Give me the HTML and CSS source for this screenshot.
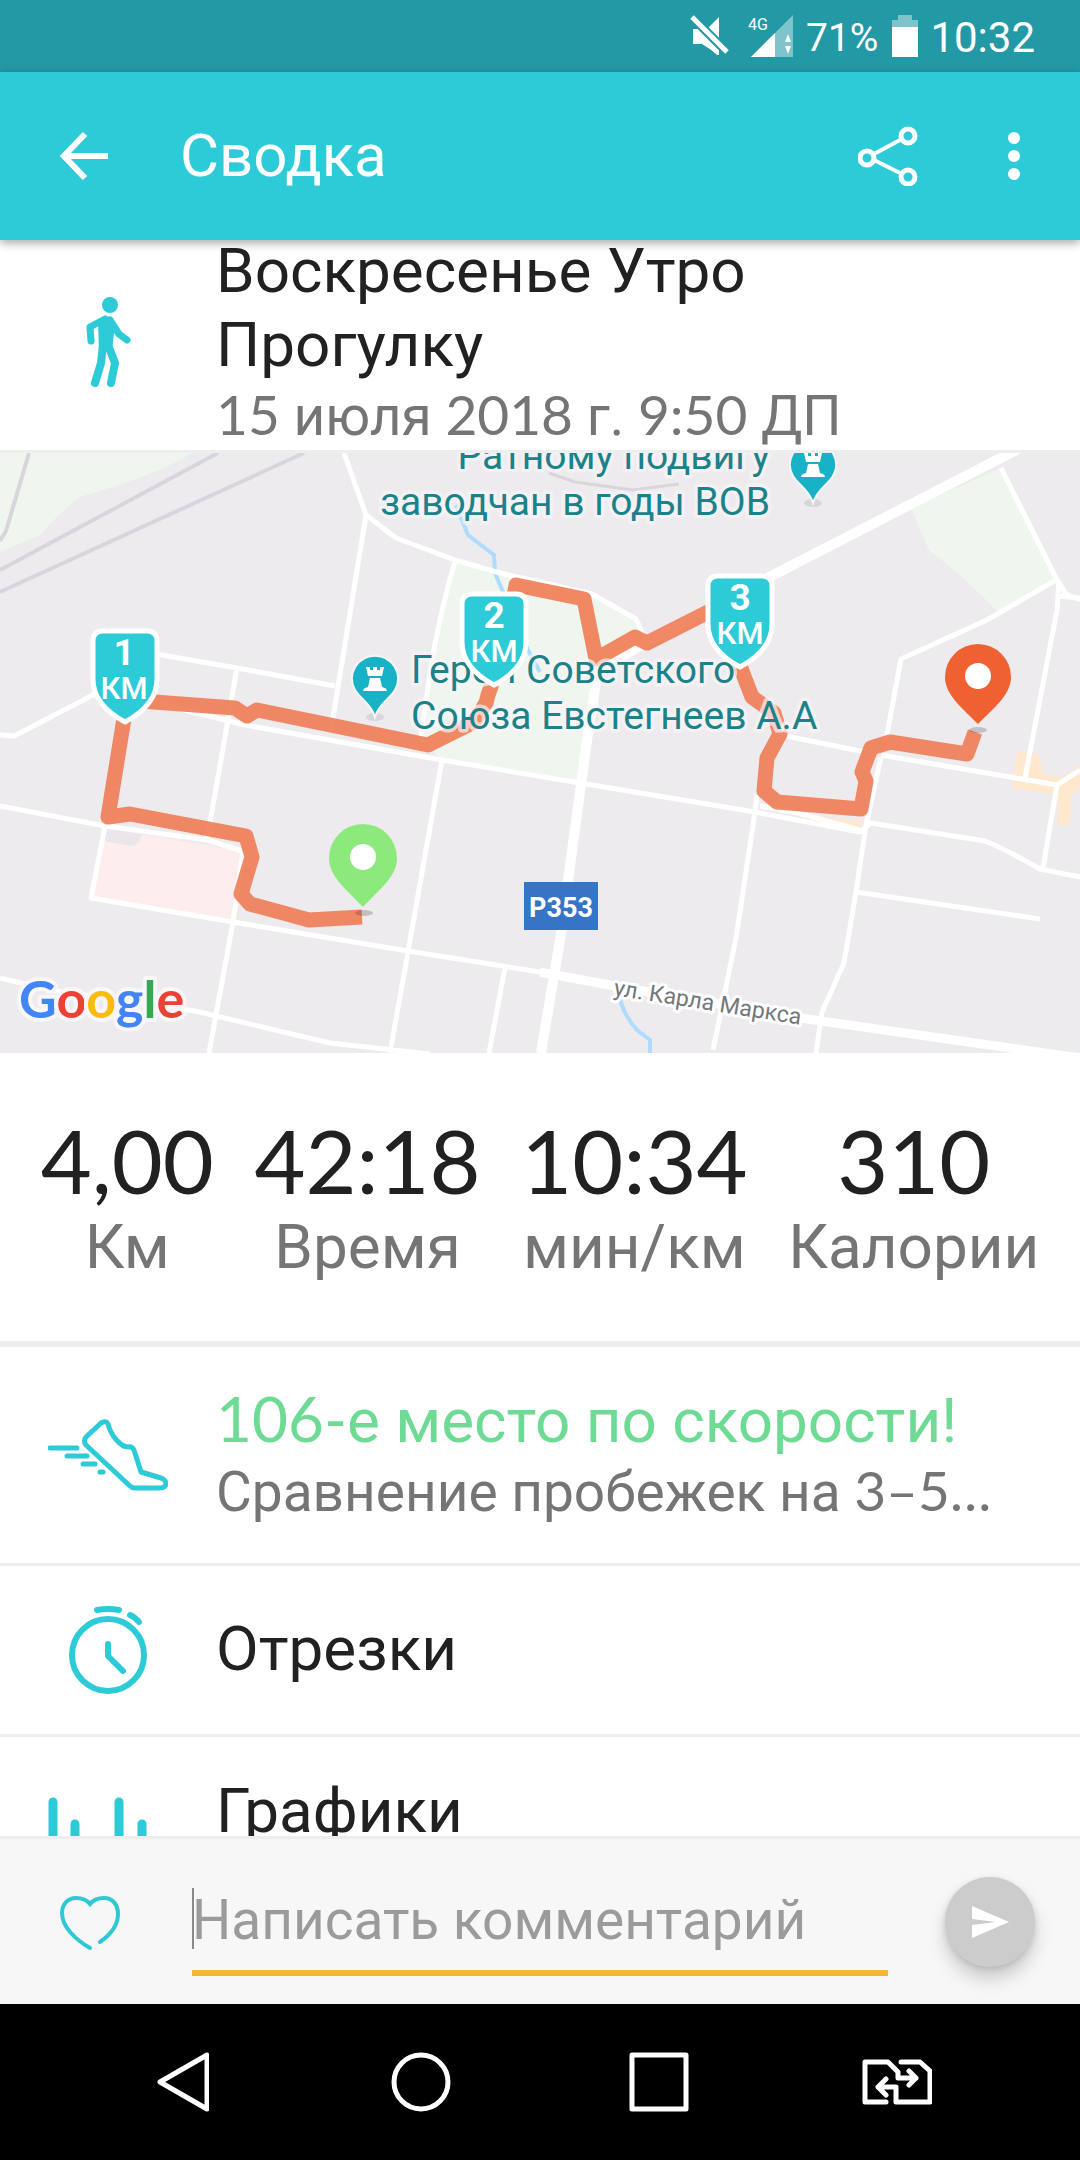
FILE: index.html
```html
<!DOCTYPE html>
<html lang="ru">
<head>
<meta charset="utf-8">
<meta name="viewport" content="width=device-width, initial-scale=1">
<title>Сводка</title>
<link rel="stylesheet" href="styles.css">
</head>
<body>
<div class="status">
  <svg class="status-mute" width="40" height="42" viewBox="0 0 40 42" aria-hidden="true"><path d="M29 2V30L15 16ZM3 14H8L29 35V40L12 29H3Z" fill="#fff"/><path d="M2 2L37 37" stroke="#2499a6" stroke-width="9"/><path d="M2 2L37 37" stroke="#fff" stroke-width="5"/><path d="M3 14L29 36V40H27L15 29H3Z" fill="#fff"/></svg>
  <svg class="status-signal" width="46" height="42" viewBox="0 0 46 42" aria-hidden="true"><path d="M3 42L45 0V42Z" fill="#fff" opacity=".42"/><path d="M3 42L27 18V42Z" fill="#fff"/><path d="M37 27L40 19L43 27ZM37 31H43L40 39Z" fill="#fff"/><text class="signal-kind" x="0" y="15">4G</text></svg>
  <span class="status-text status-charge">71%</span>
  <svg class="status-battery" width="26" height="42" viewBox="0 0 26 42" aria-hidden="true"><path d="M6 0H20V5H26V12H0V5H6Z" fill="#fff" opacity=".42"/><path d="M0 12H26V42H0Z" fill="#fff"/></svg>
  <time class="status-text status-time">10:32</time>
</div>

<header class="appbar">
  <button class="icon-button" type="button" aria-label="Назад"><svg width="48" height="48" viewBox="0 0 48 48"><path d="M48 24H4M25 2L4 24L25 46" fill="none" stroke="#fff" stroke-width="6"/></svg></button>
  <h1 class="appbar-title">Сводка</h1>
  <button class="icon-button" type="button" aria-label="Поделиться"><svg width="60" height="60" viewBox="0 0 60 60" fill="none" stroke="#fff"><path d="M16 28L42 14M16 34L42 47" stroke-width="4"/><g stroke-width="5"><circle cx="9" cy="32" r="7"/><circle cx="50" cy="10" r="7"/><circle cx="50" cy="51" r="7"/></g></svg></button>
  <button class="icon-button menu-button" type="button" aria-label="Ещё"><svg width="12" height="48" viewBox="0 0 12 48" fill="#fff"><circle cx="6" cy="6" r="6"/><circle cx="6" cy="24" r="6"/><circle cx="6" cy="42" r="6"/></svg></button>
</header>

<main class="feed">
  <section class="row activity">
    <span class="row-icon"><svg width="48" height="90" viewBox="0 0 48 90" fill="none" stroke="#2dcad7" stroke-linecap="round" stroke-linejoin="round"><circle cx="26" cy="8" r="8" fill="#2dcad7" stroke="none"/><path d="M14 26Q21 18 27 20Q31 24 30 36L28 54H15Z" fill="#2dcad7" stroke="none"/><path d="M21 22L6 30L7 44" stroke-width="7"/><path d="M26 23L35 37L43 43" stroke-width="7"/><path d="M19 48L17 66L11 86" stroke-width="8"/><path d="M24 48L31 66L27 86" stroke-width="8"/></svg></span>
    <div class="row-text">
      <h2 class="row-title">Воскресенье Утро Прогулку</h2>
      <p class="row-sub"><span class="num">15</span> июля <span class="num">2018</span> г. <span class="num">9:50</span> ДП</p>
    </div>
  </section>

  <svg class="map" viewBox="0 453 1080 600" preserveAspectRatio="xMidYMid slice" role="img" aria-label="Карта маршрута">
    <defs>
      <g id="shield"><path d="M-22 0H22Q32 0 32 10V48Q32 74 0 91Q-32 74 -32 48V10Q-32 0 -22 0Z" fill="#2dcad7" stroke="#fff" stroke-width="5"/></g>
      <g id="poi"><ellipse cx="0" cy="60" rx="9" ry="4" fill="#d8d6d9"/><path d="M0 60C-4 46 -15 42 -20 33A23 23 0 1 1 20 33C15 42 4 46 0 60Z" fill="#18b2c6" stroke="#f6f5f7" stroke-width="2"/><path d="M-9 10H-5V13H-2V10H2V13H5V10H9L7 19H-7ZM-5 21H5L7 30Q12 31 12 34H-12Q-12 31 -7 30Z" fill="#fff"/></g>
    </defs>
    <path d="M0 453H1080V1053H0Z" fill="#edebee"/>
    <g fill="#eef6ee">
      <path d="M0 453H192Q160 474 80 497Q60 512 40 535L0 552Z"/>
      <path d="M455 562L592 593L636 617L643 635L598 672L578 783L442 760L420 738L432 660Z"/>
      <path d="M1001 468L1056 578L998 612Q970 582 929 550Q920 530 911 508Z"/>
    </g>
    <path d="M107 828L142 834L245 852L233 921L93 897Z" fill="#fdeded"/>
    <path d="M107 828L142 834Q140 846 130 846L104 841Z" fill="#ebe6e9"/>
    <path d="M1017 751L1039 754L1043 774L1060 778L1080 766V788L1072 795L1069 826L1057 824L1058 795L1012 788ZM798 813L862 822L858 832L810 823Z" fill="#ffe8cd"/>
    <g fill="none" stroke="#d8d6dc" stroke-width="4"><path d="M29 453L6 531L0 541M218 453L0 570M304 453L0 592"/><path d="M549 473L575 482L633 490L679 484" stroke-width="3"/></g>
    <g fill="none" stroke="#aedcff" stroke-width="4"><path d="M456 505L468 535L494 555L495 573L503 592L528 650L540 672M619 992Q621 1012 637 1030L650 1040V1053"/></g>
    <g fill="none" stroke="#fff" stroke-width="5" stroke-linejoin="round">
      <path d="M344 453L366 515L396 538L455 560L500 573L592 594L636 619L643 634M366 515L331 730M455 562Q443 600 432 660L420 742"/>
      <path d="M0 735L14 736L95 694M150 653L237 668L335 686M237 668L207 840M160 704L245 725L442 760L580 783L755 812L860 832L871 823L985 841Q1005 849 1040 869L1080 877"/>
      <path d="M442 760L390 1053M0 806L105 826L207 840L243 851L233 922L209 1053M105 826L91 898L233 922L408 951L540 972M0 978L50 990L195 1011L330 1043L430 1054M505 968L489 1053"/>
      <path d="M757 795L755 812L736 938L713 1050M760 806L798 813L860 830M881 757L866 825L856 892L844 963L822 1012L816 1053M856 892L1040 919M886 740L901 659L987 620L1056 580M1001 468L1056 578L1066 594L1080 600M1059 580L1057 610L1025 778M1058 596L1080 598M781 735L865 752M881 755L1057 785L1080 770M1057 785L1043 868"/>
      <path d="M1030 443L777 573L636 648L596 673M598 670L587 740L560 940L541 1053" stroke-width="10"/><path d="M540 972L620 987L800 1018L1080 1058" stroke-width="9"/>
    </g>
    <path class="route" d="M362 917L309 920L250 904L241 894L252 857L246 836L130 814L108 817L127 700L235 708L247 716L257 710L428 745L474 722L486 703L488 695L504 650L516 585L584 599L596 659L635 637L647 643L720 606L740 666L752 697L774 713L780 734L767 758L764 791L777 802L861 809L866 781L862 772L871 748L890 742L967 754L975 732"/>

    <g class="poi-label">
      <text x="770" y="469" text-anchor="end">Ратному подвигу</text>
      <text x="770" y="515" text-anchor="end">заводчан в годы ВОВ</text>
      <text x="411" y="683">Герой Советского</text>
      <text x="411" y="729">Союза Евстегнеев А.А</text>
    </g>
    <use href="#poi" x="813" y="443"/>
    <use href="#poi" x="375" y="657"/>
    <path d="M524 882H598V930H524Z" fill="#3674c6"/>
    <text class="road-number" x="561" y="917" text-anchor="middle">Р353</text>
    <text class="street" transform="translate(613 995) rotate(9)">ул. Карла Маркса</text>

    <use href="#shield" x="125" y="631"/>
    <use href="#shield" x="494" y="594"/>
    <use href="#shield" x="740" y="576"/>
    <g class="km-number"><text x="124" y="665">1</text><text x="494" y="628">2</text><text x="740" y="610">3</text></g>
    <g class="km-unit"><text x="124" y="699">КМ</text><text x="494" y="662">КМ</text><text x="740" y="644">КМ</text></g>

    <ellipse cx="978" cy="730" rx="9" ry="3" fill="#000" opacity=".18"/>
    <path d="M978 724C960 706 945 694 945 677A33 33 0 0 1 1011 677C1011 694 996 706 978 724Z" fill="#ef6131"/><circle cx="978" cy="676" r="13" fill="#fff"/>
    <ellipse cx="364" cy="913" rx="9" ry="3" fill="#000" opacity=".18"/>
    <path d="M363 907C345 888 329 876 329 858A34 34 0 0 1 397 858C397 876 381 888 363 907Z" fill="#8cea7c"/><circle cx="363" cy="857" r="13" fill="#fff"/>

    <text class="google" x="19" y="1018"><tspan fill="#4285f4">G</tspan><tspan fill="#ea4335">o</tspan><tspan fill="#fbbc05">o</tspan><tspan fill="#4285f4">g</tspan><tspan fill="#34a853">l</tspan><tspan fill="#ea4335">e</tspan></text>
  </svg>

  <section class="stats">
    <div class="stat"><span class="stat-value">4,00</span><span class="stat-label">Км</span></div>
    <div class="stat"><span class="stat-value">42:18</span><span class="stat-label">Время</span></div>
    <div class="stat"><span class="stat-value">10:34</span><span class="stat-label">мин/км</span></div>
    <div class="stat"><span class="stat-value">310</span><span class="stat-label">Калории</span></div>
  </section>

  <a class="row" href="#rank">
    <span class="row-icon"><svg width="120" height="120" viewBox="0 0 120 120" fill="none" stroke="#2dcad7" stroke-width="5" stroke-linecap="round" stroke-linejoin="round"><path d="M38 42L53 28Q58 25 60 29C63 41 73 52 80 52Q84 51 86 55L93 77L113 83Q118 85 118 89Q117 93 111 93H87Q84 93 82 91L38 50Q35 46 38 42Z"/><path d="M2 53H29M19 61H39M35 69H47M52 77H55"/></svg></span>
    <span class="row-text">
      <span class="row-title rank"><span class="num">106-</span>е место по скорости!</span>
      <span class="row-sub">Сравнение пробежек на <span class="num">3–5…</span></span>
    </span>
  </a>
  <a class="row row-single" href="#laps">
    <span class="row-icon"><svg width="120" height="120" viewBox="0 0 120 120" fill="none" stroke="#2dcad7" stroke-width="6" stroke-linecap="round" stroke-linejoin="round"><circle cx="60" cy="65" r="36"/><path d="M49 20Q60 18 71 20M82 25Q87 27 91 32M60 54V66L75 81"/></svg></span>
    <span class="row-text"><span class="row-title">Отрезки</span></span>
  </a>
  <a class="row" href="#charts">
    <span class="row-icon"><svg width="120" height="120" viewBox="0 0 120 120" fill="none" stroke="#2dcad7" stroke-width="9" stroke-linecap="round"><path d="M5 17V104M27 39V81M71 17V104M94 39V81"/></svg></span>
    <span class="row-text"><span class="row-title">Графики</span></span>
  </a>
</main>

<form class="comment">
  <button class="icon-button" type="button" aria-label="Нравится"><svg width="60" height="60" viewBox="0 0 60 60" fill="none" stroke="#2fc9d6" stroke-width="4" stroke-linecap="round"><path d="M30 56C16 48 2 35 2 21C2 12 8 6 16 6C22 6 27 8 30 12C33 8 38 6 44 6C53 6 58 13 58 22C58 34 50 43 40 50"/></svg></button>
  <input class="comment-field" type="text" placeholder="Написать комментарий" aria-label="Написать комментарий">
  <button class="send" type="button" aria-label="Отправить"><svg width="37" height="32" viewBox="0 0 37 32"><path d="M0 0L37 16L0 32V19L24 16L0 13Z" fill="#fff"/></svg></button>
</form>

<nav class="system-nav">
  <button class="nav-button" type="button" aria-label="Назад"><svg width="52" height="60" viewBox="0 0 52 60"><path d="M50 3V57L3 30Z" fill="none" stroke="#fff" stroke-width="5" stroke-linejoin="round"/></svg></button>
  <button class="nav-button" type="button" aria-label="Домой"><svg width="60" height="60" viewBox="0 0 60 60"><circle cx="30" cy="30" r="27" fill="none" stroke="#fff" stroke-width="5"/></svg></button>
  <button class="nav-button" type="button" aria-label="Недавние"><svg width="60" height="60" viewBox="0 0 60 60"><rect x="3" y="3" width="54" height="54" fill="none" stroke="#fff" stroke-width="5" stroke-linejoin="round"/></svg></button>
  <button class="nav-button" type="button" aria-label="Сменить SIM"><svg width="70" height="58" viewBox="0 0 70 58" fill="none" stroke="#fff" stroke-width="5" stroke-linecap="round" stroke-linejoin="round"><path d="M24 49H3V9H26L36 19V25H54M47 18L54 25L47 32M39 9H58L68 18V49H34V34H16M24 26L16 34L24 42"/></svg></button>
</nav>
</body>
</html>
```

FILE: styles.css
```css
* {
  box-sizing: border-box;
}

body {
  margin: 0;
  height: 100vh;
  display: flex;
  flex-direction: column;
  overflow: hidden;
  background: #fff;
  color: #212121;
  font-family: Roboto, "Noto Sans", sans-serif;
}

button {
  padding: 0;
  border: 0;
  background: none;
  display: flex;
  align-items: center;
  justify-content: center;
}

svg {
  display: block;
  flex: none;
}

h1,
h2,
p {
  margin: 0;
  font-weight: 400;
}

.num {
  font-family: Lato, sans-serif;
  font-weight: 400;
  line-height: 0;
}

/* Status bar */

.status {
  flex: none;
  height: 72px;
  padding-right: 45px;
  display: flex;
  align-items: center;
  justify-content: flex-end;
  background: #2499a6;
  color: #fff;
}

.status-text {
  padding-top: 3px;
}

.status-signal {
  margin-left: 18px;
}

.signal-kind {
  font-size: 16px;
  fill: #fff;
}

.status-charge {
  margin-left: 12px;
  font-size: 39px;
}

.status-battery {
  margin-left: 14px;
}

.status-time {
  margin-left: 12px;
  font-size: 42px;
}

/* App bar */

.appbar {
  position: relative;
  z-index: 1;
  flex: none;
  height: 168px;
  padding: 0 60px;
  display: flex;
  align-items: center;
  background: #2dcad7;
  color: #fff;
  box-shadow: 0 3px 9px rgba(0, 0, 0, 0.35);
}

.appbar-title {
  flex: 1;
  margin-left: 72px;
  font-size: 60px;
  line-height: 72px;
}

.menu-button {
  margin-left: 90px;
}

/* Scrolling summary */

.feed {
  flex: 1;
  min-height: 0;
  overflow: hidden;
  display: flex;
  flex-direction: column;
}

.row {
  flex: none;
  height: 219px;
  padding-right: 60px;
  display: flex;
  border-bottom: 3px solid #eee;
  color: inherit;
  text-decoration: none;
}

.row-single {
  height: 171px;
}

.row-icon {
  width: 216px;
  display: flex;
  align-items: center;
  justify-content: center;
}

.row-text {
  flex: 1;
  min-width: 0;
  padding-top: 37px;
}

.row-single .row-text {
  padding-top: 46px;
}

.row-title,
.row-sub {
  display: block;
  white-space: nowrap;
}

.row-title {
  font-size: 62px;
  line-height: 74px;
}

.row-sub {
  font-size: 55px;
  line-height: 68px;
  color: #757575;
}

.rank {
  color: #6ddb93;
}

.activity {
  margin-top: -6px;
  padding-right: 180px;
}

.activity .row-text {
  padding-top: 0;
}

.activity .row-title {
  white-space: normal;
}

/* Map */

.map {
  width: 100%;
  height: auto;
}

.route {
  fill: none;
  stroke: #ef7c54;
  stroke-width: 15px;
  stroke-linejoin: round;
  opacity: 0.9;
}

.poi-label {
  font-size: 39px;
  fill: #1b8289;
  stroke: #f8f5f8;
  stroke-opacity: 0.7;
  stroke-width: 7px;
  stroke-linejoin: round;
  paint-order: stroke;
}

.road-number {
  font-size: 27px;
  font-weight: 700;
  fill: #fff;
}

.street {
  font-size: 23px;
  fill: #72777a;
  stroke: #fff;
  stroke-width: 6px;
  stroke-linejoin: round;
  paint-order: stroke;
}

.km-number {
  font-size: 37px;
  font-weight: 700;
  fill: #fff;
  text-anchor: middle;
}

.km-unit {
  font-size: 31px;
  font-weight: 500;
  fill: #fff;
  text-anchor: middle;
}

.google {
  font-family: Lato, sans-serif;
  font-size: 52px;
  font-weight: 700;
  stroke: #f8f6f8;
  stroke-width: 8px;
  stroke-linejoin: round;
  paint-order: stroke;
}

/* Totals */

.stats {
  flex: none;
  height: 294px;
  padding-top: 62px;
  display: flex;
  justify-content: space-evenly;
  border-bottom: 6px solid #eee;
}

.stat {
  display: flex;
  flex-direction: column;
  align-items: center;
  gap: 5px;
}

.stat-value {
  font-family: Lato, sans-serif;
  font-weight: 400;
  font-size: 88px;
  line-height: 90px;
}

.stat-label {
  font-size: 62px;
  line-height: 74px;
  color: #757575;
}

/* Comment bar */

.comment {
  flex: none;
  height: 168px;
  padding: 0 45px 0 60px;
  display: flex;
  align-items: center;
  border-top: 3px solid #eee;
  background: #f7f7f7;
}

.comment-field {
  flex: 1;
  min-width: 0;
  height: 108px;
  margin: 0 57px 0 72px;
  padding: 2px 0 0;
  border: 0;
  border-bottom: 6px solid #fcb53a;
  border-radius: 0;
  outline: 0;
  background: linear-gradient(#8a8a8a, #8a8a8a) left center / 2px 61px no-repeat;
  font-family: inherit;
  font-size: 55px;
  color: #212121;
}

.comment-field::placeholder {
  color: #9b9b9b;
  opacity: 1;
}

.send {
  width: 90px;
  height: 90px;
  border-radius: 50%;
  background: #ccc;
  box-shadow: 0 12px 18px rgba(0, 0, 0, 0.18), 0 2px 6px rgba(0, 0, 0, 0.12);
}

/* System navigation */

.system-nav {
  flex: none;
  height: 156px;
  padding: 0 64px;
  display: flex;
  background: #000;
}

.nav-button {
  flex: 1;
}
```
